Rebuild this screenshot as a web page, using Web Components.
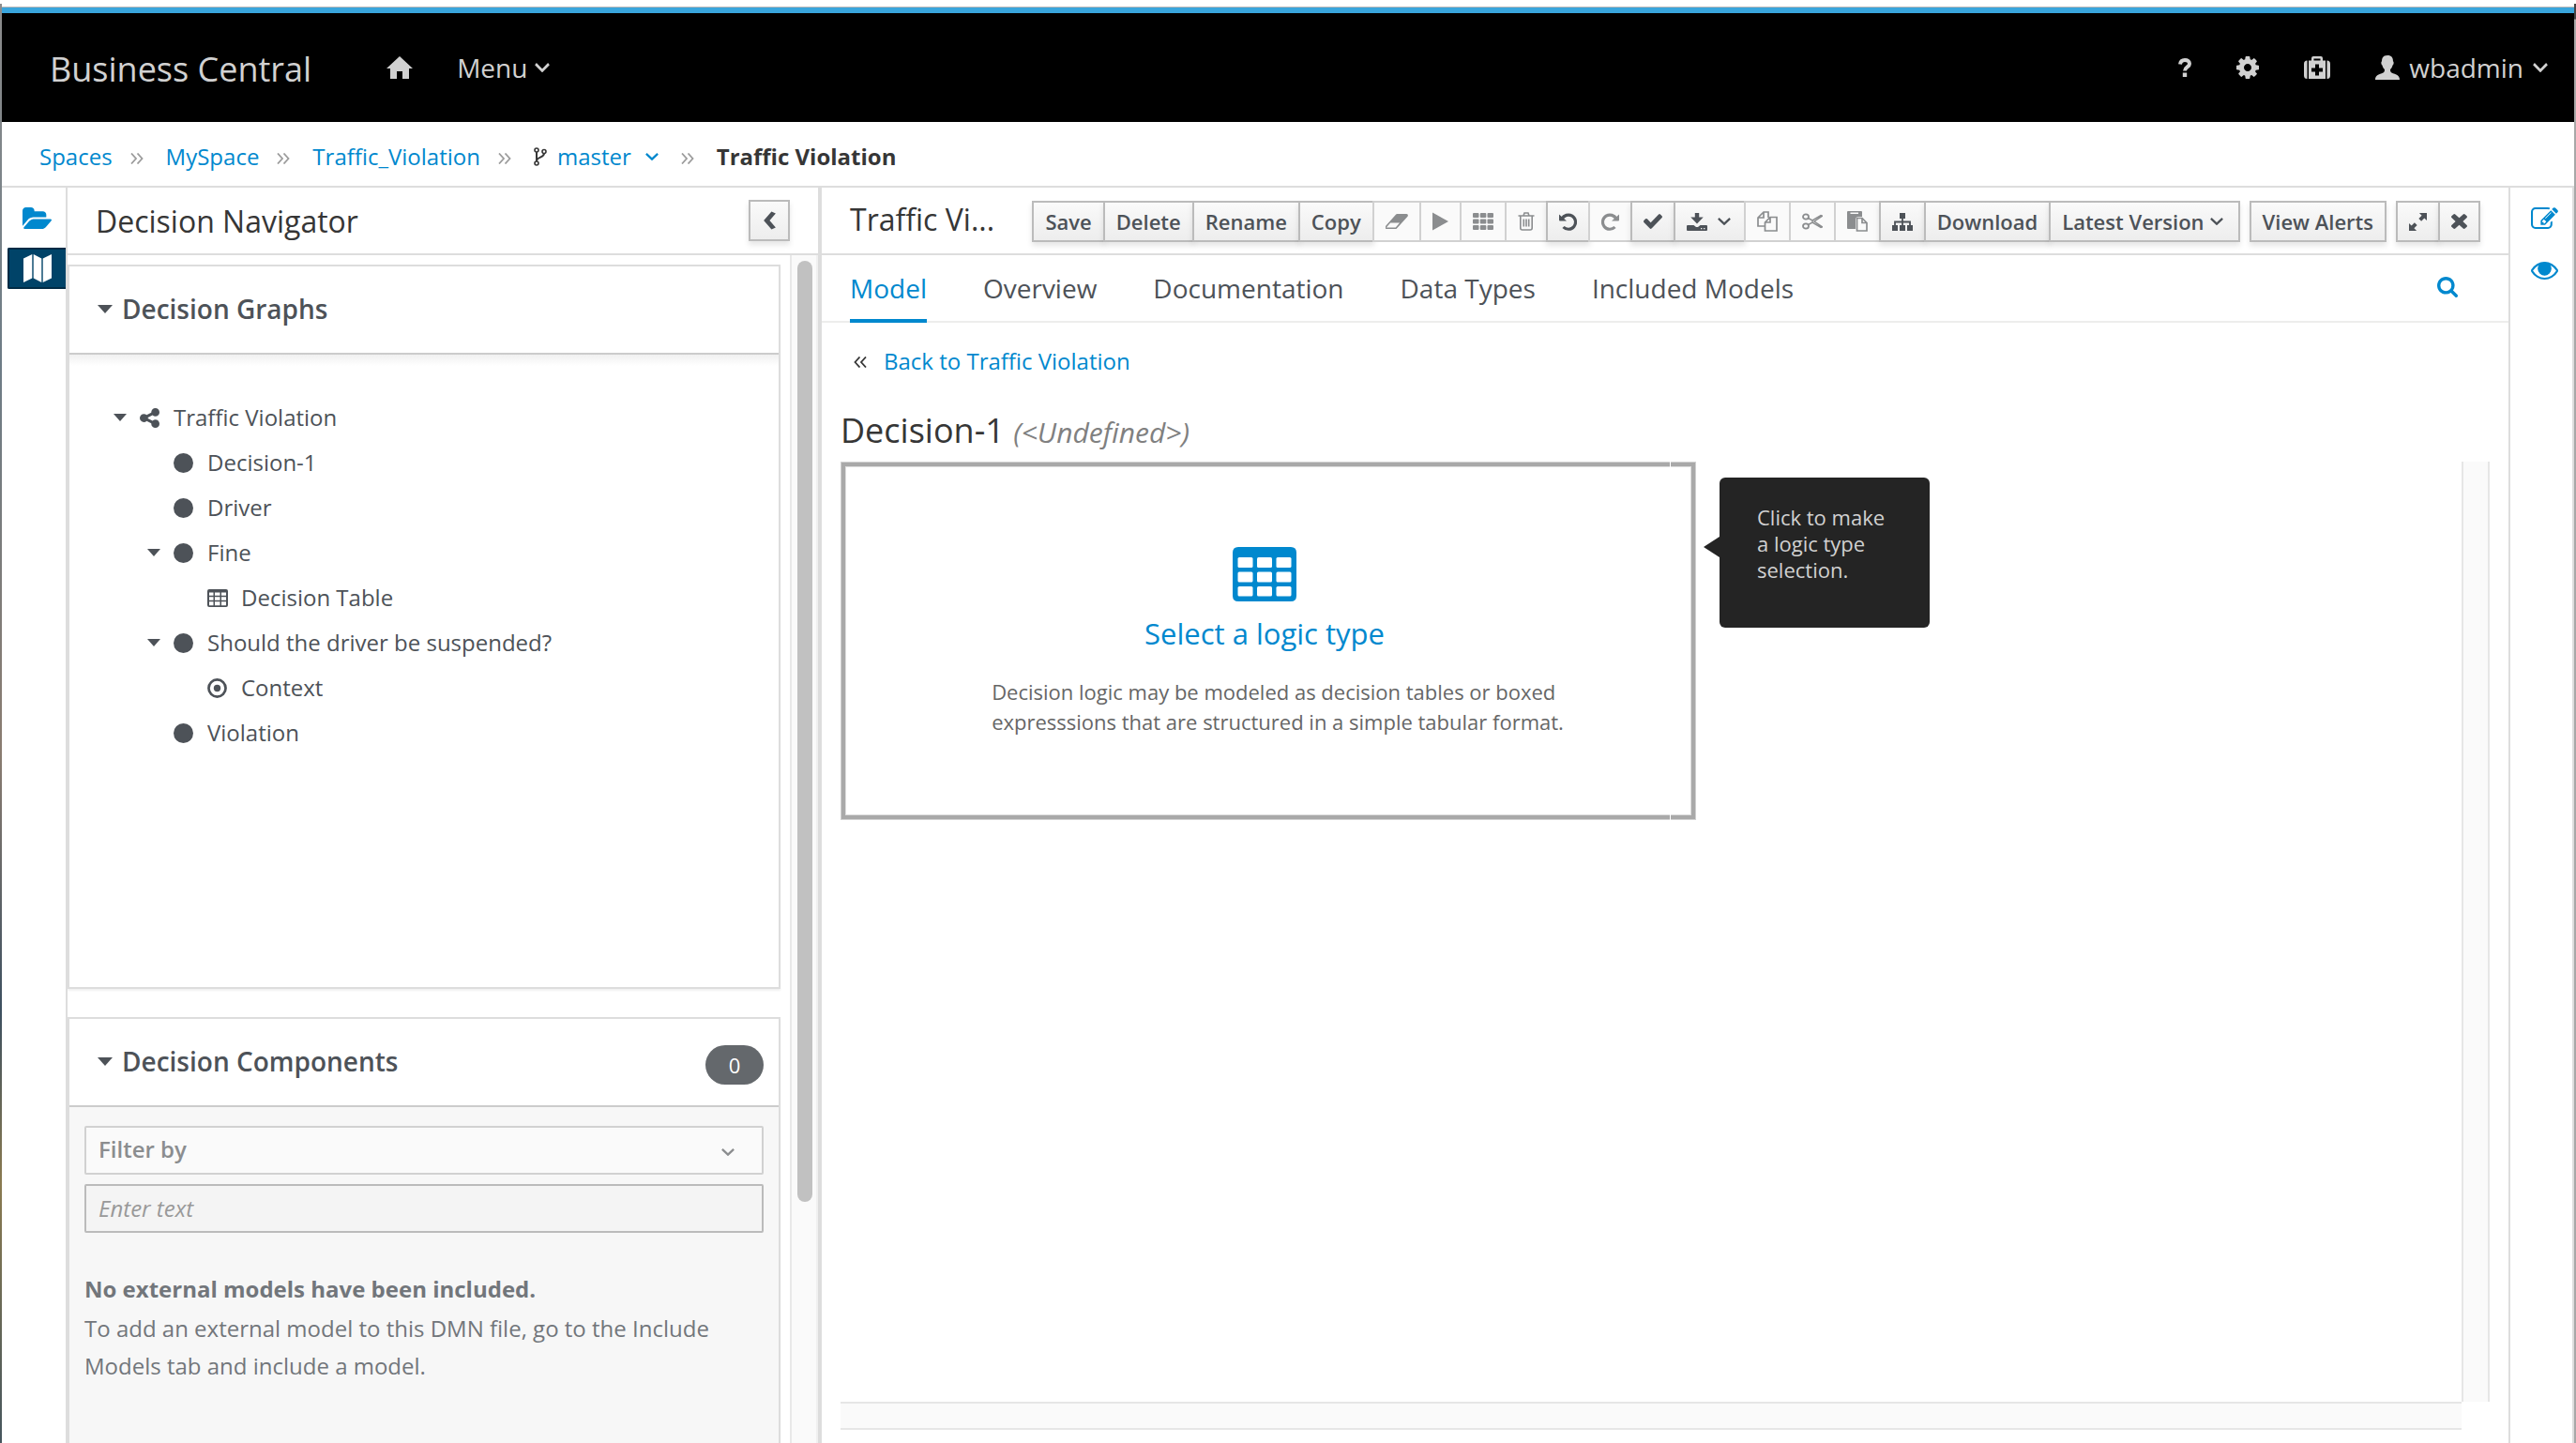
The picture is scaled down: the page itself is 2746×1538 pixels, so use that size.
<!DOCTYPE html>
<html lang="en">
<head>
<meta charset="utf-8">
<title>Business Central - Traffic Violation</title>
<style>
  html, body { margin: 0; height: 100%; }
  body { font-family: "Open Sans", "Noto Sans", sans-serif; font-size: 24px; color: #4d5258; background: #fff; overflow: hidden; }
</style>
</head>
<body>
<bc-app></bc-app>

<script>
const define = (name, html, setup) => {
  const tpl = document.createElement('template');
  tpl.innerHTML = html;
  customElements.define(name, class extends HTMLElement {
    constructor() {
      super();
      this.attachShadow({ mode: 'open' }).append(tpl.content.cloneNode(true));
    }
    connectedCallback() { if (setup) setup(this, this.shadowRoot); }
  });
};

/* Icon set: [viewBox, markup] */
const ICONS = {
  home: ['0 0 28 24', '<path fill="currentColor" d="M14 0 28 13h-4v11h-7v-8h-6v8H4V13H0z"/>'],
  question: ['0 0 14 20', '<path fill="none" stroke="currentColor" stroke-width="4" d="M2 6.500C2.500 3 4.500 2 7 2c3 0 5 1.500 5 4 0 3.500-5 3.500-5 7.500"/><path fill="currentColor" d="M4.800 15.500h4.400V20H4.800z"/>'],
  cog: ['128 128 1536 1536', '<path fill="currentColor" d="M1152 896q0-106-75-181t-181-75-181 75-75 181 75 181 181 75 181-75 75-181zm512-109v222q0 12-8 23t-20 13l-185 28q-19 54-39 91 35 50 107 138 10 12 10 25t-9 23q-27 37-99 108t-94 71q-12 0-26-9l-138-108q-44 23-91 38-16 136-29 186-7 28-36 28h-222q-14 0-24.500-8.500t-11.500-21.500l-28-184q-49-16-90-37l-141 107q-10 9-25 9-14 0-25-11-126-114-165-168-7-10-7-23 0-12 8-23 15-21 51-66.500t54-70.500q-27-50-41-99l-183-27q-13-2-21-12.500t-8-23.500v-222q0-12 8-23t19-13l186-28q14-46 39-92-40-57-107-138-10-12-10-24 0-10 9-23 26-36 98.500-107.500t94.500-71.500q13 0 26 10l138 107q44-23 91-38 16-136 29-186 7-28 36-28h222q14 0 24.500 8.500t11.500 21.500l28 184q49 16 90 37l142-107q9-9 24-9 13 0 25 10 129 119 165 170 7 8 7 22 0 12-8 23-15 21-51 66.500t-54 70.500q26 50 41 98l183 28q13 2 21 12.500t8 23.500z"/>'],
  medkit: ['0 0 28 24', '<path fill="currentColor" d="M3.500 4.500V24Q0 24 0 20.500V8q0-3.500 3.500-3.500zM24.500 4.500Q28 4.500 28 8v12.500q0 3.500-3.500 3.500z"/><path fill="currentColor" fill-rule="evenodd" d="M5 4.500h3V2q0-2 2-2h8q2 0 2 2v2.500h3V24H5zM10.500 4.500h7v-2h-7zM12 8.500v4H8v4h4v4h4v-4h4v-4h-4v-4z"/>'],
  user: ['0 0 26 26', '<path fill="currentColor" d="M13 0c4.500 0 6 2.500 6 6.500 1 0 .8 3.500-.5 4-.4 2.500-1.500 3.500-2.500 4.500 0 3 1 3.500 4 4.500 3.500 1 6 2.500 6 6.500H0c0-4 2.500-5.500 6-6.500 3-1 4-1.500 4-4.500-1-1-2.100-2-2.500-4.500-1.300-.5-1.500-4-.5-4C7 2.500 8.500 0 13 0z"/>'],
  chevron: ['0 0 16 9', '<path fill="none" stroke="currentColor" stroke-width="2.600" d="M1 1l7 6.500L15 1"/>'],
  back: ['0 0 12 20', '<path fill="none" stroke="currentColor" stroke-width="4" d="M9.500 1.500 4 10l5.500 8.500"/>'],
  sep: ['0 0 14 12', '<path fill="none" stroke="currentColor" stroke-width="1.800" d="M1 .5 6 6l-5 5.500M7.500 .5l5 5.500-5 5.500"/>'],
  sepback: ['0 0 14 12', '<path fill="none" stroke="currentColor" stroke-width="1.800" d="M6.500 .5 1.500 6l5 5.500M13 .5 8 6l5 5.500"/>'],
  fork: ['0 0 14 20', '<g fill="none" stroke="currentColor" stroke-width="1.600"><circle cx="3" cy="3" r="2"/><circle cx="3" cy="17" r="2"/><circle cx="11" cy="4.500" r="2"/></g><path fill="none" stroke="currentColor" stroke-width="2" d="M3 5v10M11 6.500C11 11 4 10 3 14"/>'],
  folder: ['0 128 1880 1408', '<path fill="currentColor" d="M1879 952q0 31-31 66l-336 396q-43 51-120.500 86.500t-143.500 35.500h-1088q-34 0-60.500-13t-26.500-43q0-31 31-66l336-396q43-51 120.500-86.500t143.500-35.500h1088q34 0 60.500 13t26.500 43zm-343-344v160h-832q-94 0-197 47.500t-164 119.500l-337 396-5 6q0-4-.5-12.500t-.5-12.500v-960q0-92 66-158t158-66h320q92 0 158 66t66 158v32h544q92 0 158 66t66 158z"/>'],
  map: ['0 0 30 30', '<path fill="currentColor" d="M0 4.500 9.300 0v25.500L0 30zM10.700 0l8.600 4.500V30l-8.600-4.500zM20.700 4.500 30 0v25.500L20.700 30z"/>'],
  caret: ['0 0 16 9', '<path fill="currentColor" d="M0 0h16L8 9z"/>'],
  share: ['128 128 1536 1536', '<path fill="currentColor" d="M1344 1024q133 0 226.500 93.500t93.500 226.500-93.500 226.500-226.500 93.500-226.500-93.500-93.500-226.500q0-12 2-34l-360-180q-92 86-218 86-133 0-226.500-93.500t-93.500-226.500 93.500-226.500 226.500-93.500q126 0 218 86l360-180q-2-22-2-34 0-133 93.500-226.500t226.500-93.500 226.500 93.500 93.500 226.500-93.500 226.500-226.500 93.500q-126 0-218-86l-360 180q2 22 2 34t-2 34l360 180q92-86 218-86z"/>'],
  circle: ['0 0 20 20', '<circle cx="10" cy="10" r="10" fill="currentColor"/>'],
  dot: ['0 0 20 20', '<circle cx="10" cy="10" r="8.600" fill="none" stroke="currentColor" stroke-width="2.600"/><circle cx="10" cy="10" r="3.500" fill="currentColor"/>'],
  tablesmall: ['0 0 22 19', '<path fill="currentColor" fill-rule="evenodd" d="M2 0h18q2 0 2 2v15q0 2-2 2H2q-2 0-2-2V2q0-2 2-2zM2 3.500v3.200h4.500V3.500zm6 0v3.200h5.500V3.500zm7 0v3.200h5V3.500zM2 8.200v3.500h4.500V8.200zm6 0v3.500h5.500V8.200zm7 0v3.500h5V8.200zM2 13.200v4h4.500v-4zm6 0v4h5.500v-4zm7 0v4h5v-4z"/>'],
  table: ['0 0 68 58', '<path fill="currentColor" d="M6 0h56q6 0 6 6v46q0 6-6 6H6q-6 0-6-6V6q0-6 6-6z"/><g fill="#fff"><rect x="5.500" y="11" width="16" height="11" rx="1.500"/><rect x="26" y="11" width="16" height="11" rx="1.500"/><rect x="46.500" y="11" width="16" height="11" rx="1.500"/><rect x="5.500" y="26.500" width="16" height="11" rx="1.500"/><rect x="26" y="26.500" width="16" height="11" rx="1.500"/><rect x="46.500" y="26.500" width="16" height="11" rx="1.500"/><rect x="5.500" y="42" width="16" height="10.500" rx="1.500"/><rect x="26" y="42" width="16" height="10.500" rx="1.500"/><rect x="46.500" y="42" width="16" height="10.500" rx="1.500"/></g>'],
  eraser: ['0 256 1864 1280', '<path fill="currentColor" d="M832 1408l336-384h-768l-336 384h768zm1013-1077q15 34 9.500 71.500t-30.500 65.500l-896 1024q-38 44-96 44h-768q-38 0-69.500-20.500t-47.500-54.500q-15-34-9.500-71.500t30.500-65.500l896-1024q38-44 96-44h768q38 0 69.500 20.500t47.500 54.500z"/>'],
  play: ['0 0 17 20', '<path fill="currentColor" d="M0 .5 17 10 0 19.500z"/>'],
  grid: ['0 0 22 18', '<g fill="currentColor"><rect width="6.500" height="5" rx="1"/><rect x="7.800" width="6.500" height="5" rx="1"/><rect x="15.500" width="6.500" height="5" rx="1"/><rect y="6.500" width="6.500" height="5" rx="1"/><rect x="7.800" y="6.500" width="6.500" height="5" rx="1"/><rect x="15.500" y="6.500" width="6.500" height="5" rx="1"/><rect y="13" width="6.500" height="5" rx="1"/><rect x="7.800" y="13" width="6.500" height="5" rx="1"/><rect x="15.500" y="13" width="6.500" height="5" rx="1"/></g>'],
  trash: ['0 0 18 20', '<path fill="none" stroke="currentColor" stroke-width="1.600" d="M.5 4h17M6 4l1-3h4l1 3M2.800 4v13q0 2 2 2h8.400q2 0 2-2V4M6.300 7.500v8M9 7.500v8M11.700 7.500v8"/>'],
  undo: ['0 0 19 19', '<path fill="none" stroke="currentColor" stroke-width="3.200" d="M3 6.500A7.600 7.600 0 1 1 4.500 15"/><path fill="currentColor" d="M0 1.500 8 8.500H1Q0 8.500 0 7.500z"/>'],
  redo: ['0 0 19 19', '<g transform="matrix(-1 0 0 1 19 0)"><path fill="none" stroke="currentColor" stroke-width="3.200" d="M3 6.500A7.600 7.600 0 1 1 4.500 15"/><path fill="currentColor" d="M0 1.500 8 8.500H1Q0 8.500 0 7.500z"/></g>'],
  check: ['121 334 1550 1188', '<path fill="currentColor" d="M1671 566q0 40-28 68l-724 724-136 136q-28 28-68 28t-68-28l-136-136-362-362q-28-28-28-68t28-68l136-136q28-28 68-28t68 28l294 295 656-657q28-28 68-28t68 28l136 136q28 28 28 68z"/>'],
  download: ['0 0 22 19', '<path fill="currentColor" d="M8.800 0h4.400v4.500h4.500L11 11.500 4.300 4.500h4.500z"/><path fill="currentColor" fill-rule="evenodd" d="M1 13h6.500l2.500 2h2l2.500-2H21q1 0 1 1v4q0 1-1 1H1q-1 0-1-1v-4q0-1 1-1zM15 16v1.300h1.400V16zm3 0v1.300h1.400V16z"/>'],
  copy: ['0 0 22 22', '<path fill="none" stroke="currentColor" stroke-width="1.700" d="M8 16H1V7l6-6h5v6M7 1v6H1M8.500 21V12l5.500-5.500h7V21zM14 6.500V12H8.500"/>'],
  cut: ['0 0 22 18', '<g fill="none" stroke="currentColor"><ellipse cx="4" cy="4" rx="3" ry="2.700" stroke-width="1.800"/><ellipse cx="4" cy="14" rx="3" ry="2.700" stroke-width="1.800"/><path stroke-width="1.500" d="M6.500 5.500 11 8l9-5.500 1.500.7L13 9l8.500 5.800-1.500.7L11 10l-4.500 2.500M11 8v2"/></g>'],
  paste: ['0 0 22 22', '<path fill="currentColor" fill-rule="evenodd" d="M1 0h14q1 0 1 1v5h-4q-3 0-3 3v10H1q-1 0-1-1V1q0-1 1-1zm2.500 1.500V3H12V1.500z"/><path fill="none" stroke="currentColor" stroke-width="1.700" d="M10.500 7.500h5.500l5 5V21H10.500zM16 7.500v5h5"/>'],
  sitemap: ['0 0 22 19', '<path fill="currentColor" d="M8 0h6v6H8zM0 13h6v6H0zM8 13h6v6H8zM16 13h6v6h-6z"/><path fill="none" stroke="currentColor" stroke-width="1.800" d="M11 5v9M3 14V9.500h16V14"/>'],
  expand: ['0 0 20 20', '<path fill="currentColor" d="M11.500 0H20v8.500l-2.800-2.800-3.400 3.400-2.900-2.900 3.400-3.400zM0 11.500l2.800 2.800 3.400-3.400 2.900 2.900-3.400 3.400L8.500 20H0z"/>'],
  times: ['302 366 1188 1188', '<path fill="currentColor" d="M1490 1322q0 40-28 68l-136 136q-28 28-68 28t-68-28l-294-294-294 294q-28 28-68 28t-68-28l-136-136q-28-28-28-68t28-68l294-294-294-294q-28-28-28-68t28-68l136-136q28-28 68-28t68 28l294 294 294-294q28-28 68-28t68 28l136 136q28 28 28 68t-28 68l-294 294 294 294q28 28 28 68z"/>'],
  search: ['64 128 1664 1664', '<path fill="currentColor" d="M1216 832q0-185-131.500-316.500t-316.500-131.500-316.500 131.500-131.500 316.500 131.500 316.500 316.500 131.500 316.500-131.500 131.500-316.500zm512 832q0 52-38 90t-90 38q-54 0-90-38l-343-342q-179 124-399 124-143 0-273.500-55.500t-225-150-150-225-55.500-273.500 55.500-273.500 150-225 225-150 273.500-55.500 273.500 55.500 225 150 150 225 55.500 273.500q0 220-124 399l343 343q37 37 37 90z"/>'],
  edit: ['0 128 1792 1408', '<path fill="currentColor" d="M888 1184l116-116-152-152-116 116v56h96v96h56zm440-720q-16-16-33 1l-350 350q-17 17-1 33t33-1l350-350q17-17 1-33zm80 594v190q0 119-84.500 203.500t-203.500 84.500h-832q-119 0-203.500-84.500t-84.500-203.500v-832q0-119 84.500-203.500t203.500-84.500h832q63 0 117 25 15 7 18 23 3 17-9 29l-49 49q-14 14-32 8-23-6-45-6h-832q-66 0-113 47t-47 113v832q0 66 47 113t113 47h832q66 0 113-47t47-113v-126q0-13 9-22l64-64q15-15 35-7t20 29zm-96-738l288 288-672 672h-288v-288zm444 132l-92 92-288-288 92-92q28-28 68-28t68 28l152 152q28 28 28 68t-28 68z"/>'],
  eye: ['0 384 1792 1152', '<circle cx="896" cy="832" r="420" fill="currentColor"/><path fill="none" stroke="#fff" stroke-width="70" stroke-linecap="round" d="M690 800q20-150 170-190"/><path fill="currentColor" d="M1664 960q-152-236-381-353 61 104 61 225 0 185-131.500 316.500t-316.500 131.500-316.500-131.500-131.500-316.500q0-121 61-225-229 117-381 353 133 205 333.500 326.500t434.500 121.500 434.500-121.500 333.500-326.500zm128 0q0 34-20 69-140 230-376.500 368.500t-499.500 138.500-499.500-139-376.500-368q-20-35-20-69t20-69q140-229 376.500-368t499.500-139 499.500 139 376.500 368q20 35 20 69z"/>']
};

define('bc-icon', `
  <style>:host { display: inline-flex; flex: none; } svg { display: block; }</style>
  <svg aria-hidden="true" preserveAspectRatio="none"></svg>`,
  (el, root) => {
    const svg = root.querySelector('svg');
    const [box, markup] = ICONS[el.getAttribute('name')];
    svg.setAttribute('viewBox', box);
    svg.setAttribute('width', el.getAttribute('w'));
    svg.setAttribute('height', el.getAttribute('h'));
    svg.innerHTML = markup;
  });

/* Bordered push button; consecutive ones share an edge */
define('bc-button', `
  <style>
    :host { display: block; flex: none; }
    :host(:not(:first-child)) { margin-left: -2px; }
    button { display: flex; align-items: center; justify-content: center; gap: 6px; box-sizing: border-box; height: 44px; padding: 0 12px; margin: 0;
      border: 2px solid #bbb; background: linear-gradient(#fafafa, #ededed); color: #4d5258;
      font: 600 22px/36px "Open Sans", sans-serif; box-shadow: 0 4px 6px rgba(3,3,3,.1); white-space: nowrap; }
    :host([menu]) button { padding-right: 16px; }
    button:disabled { background: #fafafa; border-color: #d1d1d1; color: #8b8d8f; box-shadow: none; }
  </style>
  <button type="button"><slot></slot></button>`,
  (el, root) => {
    const b = root.querySelector('button');
    b.disabled = el.hasAttribute('off');
    if (el.hasAttribute('label')) b.setAttribute('aria-label', el.getAttribute('label'));
  });

define('bc-group', `<style>:host { display: flex; }</style><slot></slot>`);

define('bc-navbar', `
  <style>
    :host { display: flex; align-items: center; background: #000; border-top: 6px solid #39a5dc; color: #d1d1d1; min-height: 116px; padding: 0 28px 0 51px; }
    button, a { display: flex; align-items: center; background: none; border: 0; padding: 0; margin: 0; color: inherit; font: 28px/40px "Open Sans", sans-serif; text-decoration: none; }
    .brand { font-size: 36px; padding-top: 4px; }
    .left { display: flex; align-items: center; gap: 47px; margin-left: 80px; }
    .menu { gap: 8px; }
    .right { display: flex; align-items: center; gap: 48px; margin-left: auto; }
    .user { gap: 10px; }
  </style>
  <a class="brand" href="#">Business Central</a>
  <div class="left">
    <a href="#" aria-label="Home"><bc-icon name="home" w="28" h="24"></bc-icon></a>
    <button class="menu" type="button">Menu <bc-icon name="chevron" w="16" h="10"></bc-icon></button>
  </div>
  <div class="right">
    <button type="button" aria-label="Help"><bc-icon name="question" w="14" h="20"></bc-icon></button>
    <button type="button" aria-label="Settings"><bc-icon name="cog" w="24" h="24"></bc-icon></button>
    <button type="button" aria-label="Tools"><bc-icon name="medkit" w="28" h="24"></bc-icon></button>
    <button class="user" type="button"><bc-icon name="user" w="26" h="26"></bc-icon>wbadmin <bc-icon name="chevron" w="16" h="10"></bc-icon></button>
  </div>`);

define('bc-breadcrumbs', `
  <style>
    :host { display: block; border-bottom: 2px solid #ddd; }
    nav { display: flex; align-items: center; box-sizing: border-box; min-height: 68px; padding: 6px 40px 0; line-height: 32px; white-space: nowrap; }
    a { color: #0088ce; text-decoration: none; display: flex; align-items: center; }
    .sep { color: #9c9c9c; margin: 4px 24px 0 19px; }
    .fork { color: #363636; margin-right: 11px; }
    .down { margin: 0 5px 0 15px; }
    strong { color: #363636; font-weight: 700; }
  </style>
  <nav aria-label="Breadcrumb">
    <a href="#">Spaces</a><bc-icon class="sep" name="sep" w="14" h="12"></bc-icon>
    <a href="#">MySpace</a><bc-icon class="sep" name="sep" w="14" h="12"></bc-icon>
    <a href="#">Traffic_Violation</a><bc-icon class="sep" name="sep" w="14" h="12"></bc-icon>
    <bc-icon class="fork" name="fork" w="14" h="20"></bc-icon>
    <a href="#">master<bc-icon class="down" name="chevron" w="14" h="8"></bc-icon></a><bc-icon class="sep" name="sep" w="14" h="12"></bc-icon>
    <strong>Traffic Violation</strong>
  </nav>`);

define('bc-dock', `
  <style>
    :host { display: flex; flex-direction: column; flex: none; box-sizing: border-box; width: 70px; padding-top: 10px; gap: 10px; }
    :host([side=left]) { padding-left: 6px; border-right: 2px solid #ddd; }
    :host([side=right]) { padding-left: 6px; border-left: 2px solid #ddd; border-right: 2px solid #ddd; gap: 12px; }
  </style>
  <slot></slot>`);

define('bc-dock-button', `
  <style>
    :host { display: block; }
    button { display: flex; align-items: center; justify-content: center; box-sizing: border-box; width: 100%; height: 44px; padding: 0; margin: 0; border: 0; background: none; color: #0088ce; }
    :host([active]) button { background: #004368; border: 2px solid #002b45; border-right: 0; color: #fff; border-radius: 2px 0 0 2px; }
  </style>
  <button type="button"><slot></slot></button>`,
  (el, root) => root.querySelector('button').setAttribute('aria-label', el.getAttribute('label')));

define('bc-card', `
  <style>
    :host { display: block; border: 2px solid #ddd; box-shadow: 0 2px 2px rgba(3,3,3,.06); background: #fff; }
    header { display: flex; align-items: center; box-sizing: border-box; height: 94px; padding: 0 16px 0 30px; border-bottom: 2px solid #ccc; }
    h2 { display: flex; align-items: center; gap: 10px; margin: 0 0 2px; font-size: 28px; font-weight: 600; line-height: 40px; }
    ::slotted([slot=badge]) { margin-left: auto; margin-top: 6px; }
    .shade { height: 12px; background: linear-gradient(#f0f0f0, #fff); }
    .body { padding: 31px 16px 247px; }
    :host([filled]) .shade { display: none; }
    :host([filled]) .body { padding: 20px 16px; }
    :host([filled]) { background: #f7f7f7; flex: 1; border-bottom: 0; }
    :host([filled]) header { background: #fff; }
  </style>
  <header><h2><bc-icon name="caret" w="16" h="9"></bc-icon><slot name="title"></slot></h2><slot name="badge"></slot></header>
  <div class="shade"></div>
  <div class="body"><slot></slot></div>`);

define('bc-node', `
  <style>
    :host { display: block; }
    .row { display: flex; align-items: center; height: 48px; line-height: 32px; white-space: nowrap; }
    .caret { width: 28px; display: flex; visibility: hidden; }
    :host([open]) > .row > .caret { visibility: visible; }
    .icon { width: 36px; display: flex; }
    .kids { padding-left: 36px; }
  </style>
  <div class="row"><span class="caret"><bc-icon name="caret" w="14" h="8"></bc-icon></span><span class="icon"></span><slot name="text"></slot></div>
  <div class="kids"><slot></slot></div>`,
  (el, root) => {
    const small = el.getAttribute('icon') === 'tablesmall';
    root.querySelector('.icon').innerHTML = `<bc-icon name="${el.getAttribute('icon')}" w="${small ? 22 : 21}" h="${small ? 19 : 21}"></bc-icon>`;
  });

define('bc-navigator', `
  <style>
    :host { display: flex; flex-direction: column; flex: none; width: 800px; border-right: 4px solid #ddd; min-height: 0; }
    .head { display: flex; align-items: center; justify-content: space-between; box-sizing: border-box; height: 72px; padding: 0 30px; border-bottom: 2px solid #ddd; flex: none; }
    h1 { margin: 2px 0 0; font-size: 32px; font-weight: 400; line-height: 44px; color: #363636; }
    .scroll { display: flex; flex: 1; min-height: 0; }
    .cards { flex: 1; display: flex; flex-direction: column; gap: 30px; padding: 10px 10px 0 0; overflow: hidden; }
    .track { width: 16px; padding: 6px 4px 6px 6px; border-left: 2px solid #e8e8e8; border-right: 2px solid #f0f0f0; background: #fafafa; }
    .thumb { height: 80%; border-radius: 8px; background: #c1c1c1; }
    .tree { padding-left: 31px; }
    .badge { display: block; min-width: 62px; box-sizing: border-box; padding: 0 20px; border-radius: 21px; background: #64686c; color: #fff; line-height: 42px; text-align: center; font-size: 22px; }
    form { display: flex; flex-direction: column; gap: 10px; }
    .pick { display: grid; align-items: center; }
    .pick > * { grid-area: 1 / 1; }
    .pick bc-icon { justify-self: end; margin: 4px 31px 0 0; color: #8b8d8f; }
    select, input { appearance: none; box-sizing: border-box; width: 100%; height: 52px; margin: 0; padding: 0 13px 2px; border: 2px solid #d1d1d1; border-radius: 2px; background: #fafafa; color: #8b8d8f; opacity: 1; font: 600 24px/40px "Open Sans", sans-serif; }
    input { background: #f4f4f4; border-color: #bbb; font-weight: 400; }
    input::placeholder { color: #999; font-style: italic; opacity: 1; }
    .empty { margin-top: 38px; color: #72767b; line-height: 40px; }
    .empty strong { display: block; line-height: 44px; }
    .empty p { margin: 0; }
  </style>
  <div class="head"><h1>Decision Navigator</h1><bc-button label="Collapse"><bc-icon name="back" w="16" h="20"></bc-icon></bc-button></div>
  <div class="scroll">
    <div class="cards">
      <bc-card>
        <span slot="title">Decision Graphs</span>
        <div class="tree">
          <bc-node icon="share" open><span slot="text">Traffic Violation</span>
            <bc-node icon="circle"><span slot="text">Decision-1</span></bc-node>
            <bc-node icon="circle"><span slot="text">Driver</span></bc-node>
            <bc-node icon="circle" open><span slot="text">Fine</span>
              <bc-node icon="tablesmall"><span slot="text">Decision Table</span></bc-node>
            </bc-node>
            <bc-node icon="circle" open><span slot="text">Should the driver be suspended?</span>
              <bc-node icon="dot"><span slot="text">Context</span></bc-node>
            </bc-node>
            <bc-node icon="circle"><span slot="text">Violation</span></bc-node>
          </bc-node>
        </div>
      </bc-card>
      <bc-card filled>
        <span slot="title">Decision Components</span>
        <span slot="badge" class="badge">0</span>
        <form>
          <div class="pick"><select aria-label="Filter by" disabled><option>Filter by</option></select><bc-icon name="chevron" w="14" h="8"></bc-icon></div>
          <input type="text" placeholder="Enter text" aria-label="Enter text">
        </form>
        <div class="empty"><strong>No external models have been included.</strong><p>To add an external model to this DMN file, go to the Include Models tab and include a model.</p></div>
      </bc-card>
    </div>
    <div class="track"><div class="thumb"></div></div>
  </div>`);

define('bc-toolbar', `
  <style>
    :host { display: flex; align-items: center; box-sizing: border-box; height: 72px; padding: 2px 30px 0; border-bottom: 2px solid #ddd; flex: none; }
    h1 { margin: 0 0 4px; font-size: 32px; font-weight: 400; line-height: 44px; color: #363636; white-space: nowrap; }
    .actions { display: flex; gap: 10px; margin-left: auto; }
    .gap { margin: 0 -2px 0 5px; }
  </style>
  <h1>Traffic Vi...</h1>
  <div class="actions">
    <bc-group>
      <bc-button>Save</bc-button><bc-button>Delete</bc-button><bc-button>Rename</bc-button><bc-button>Copy</bc-button>
      <bc-button off label="Clear"><bc-icon name="eraser" w="24" h="16"></bc-icon></bc-button>
      <bc-button off label="Run"><bc-icon name="play" w="17" h="20"></bc-icon></bc-button>
      <bc-button off label="Grid"><bc-icon name="grid" w="22" h="18"></bc-icon></bc-button>
      <bc-button off label="Remove"><bc-icon name="trash" w="18" h="20"></bc-icon></bc-button>
      <bc-button label="Undo"><bc-icon name="undo" w="19" h="19"></bc-icon></bc-button>
      <bc-button off label="Redo"><bc-icon name="redo" w="19" h="19"></bc-icon></bc-button>
      <bc-button label="Validate"><bc-icon name="check" w="20" h="16"></bc-icon></bc-button>
      <bc-button menu label="Export"><bc-icon name="download" w="22" h="19"></bc-icon><bc-icon class="gap" name="chevron" w="14" h="8"></bc-icon></bc-button>
      <bc-button off label="Copy selection"><bc-icon name="copy" w="22" h="22"></bc-icon></bc-button>
      <bc-button off label="Cut selection"><bc-icon name="cut" w="22" h="18"></bc-icon></bc-button>
      <bc-button off label="Paste selection"><bc-icon name="paste" w="22" h="22"></bc-icon></bc-button>
      <bc-button label="Layout"><bc-icon name="sitemap" w="22" h="19"></bc-icon></bc-button>
      <bc-button>Download</bc-button>
      <bc-button menu>Latest Version <bc-icon name="chevron" w="14" h="8"></bc-icon></bc-button>
    </bc-group>
    <bc-group><bc-button>View Alerts</bc-button></bc-group>
    <bc-group>
      <bc-button label="Expand"><bc-icon name="expand" w="19" h="19"></bc-icon></bc-button>
      <bc-button label="Close"><bc-icon name="times" w="17" h="16"></bc-icon></bc-button>
    </bc-group>
  </div>`);

define('bc-tabs', `
  <style>
    :host { display: flex; align-items: flex-start; box-sizing: border-box; height: 72px; padding: 0 54px 0 30px; border-bottom: 2px solid #ededec; flex: none; }
    nav { display: flex; gap: 60px; }
    a { display: block; box-sizing: border-box; height: 72px; line-height: 70px; font-size: 28px; color: #4d5258; text-decoration: none; white-space: nowrap; }
    a[aria-current] { color: #0088ce; border-bottom: 4px solid #0088ce; }
    button { margin: 23px 0 0 auto; padding: 0; border: 0; background: none; color: #0088ce; display: flex; }
  </style>
  <nav><a href="#" aria-current="page">Model</a><a href="#">Overview</a><a href="#">Documentation</a><a href="#">Data Types</a><a href="#">Included Models</a></nav>
  <button type="button" aria-label="Search"><bc-icon name="search" w="22" h="22"></bc-icon></button>`);

define('bc-tooltip', `
  <style>
    :host { display: block; position: relative; box-sizing: border-box; width: 224px; min-height: 160px; padding: 28px 40px; border-radius: 6px; background: #242424; color: #d1d1d1; font-size: 22px; line-height: 28px; }
    .arrow { position: absolute; right: 100%; top: 63px; border: solid transparent; border-width: 11px 17px 11px 0; border-right-color: #242424; }
  </style>
  <span class="arrow"></span><slot></slot>`);

define('bc-canvas', `
  <style>
    :host { display: grid; grid-template-columns: 1fr 30px; grid-template-rows: 1fr 30px; flex: 1; min-height: 0; }
    .view { display: flex; align-items: flex-start; gap: 25px; min-width: 0; }
    .box { display: flex; flex-direction: column; align-items: center; position: relative; box-sizing: border-box; width: 912px; min-height: 382px; padding: 86px 8px 0 0; border: 5px solid #a9a9a9; outline: 1px solid #d0d0d0; outline-offset: -1px; box-shadow: inset 0 0 0 1px #ddd; background: #fff; font: 22px/32px "Open Sans", sans-serif; color: #666; text-align: left; }
    /* seam where the last grid column meets its resize strip */
    .box::after { content: ""; position: absolute; top: -5px; bottom: -5px; right: 22px; width: 1px; background: #fff; }
    .box bc-icon { color: #0088ce; }
    .title { font-size: 31px; line-height: 44px; margin-top: 12px; color: #0088ce; }
    .text { margin-top: 24px; padding-left: 28px; }
    bc-tooltip { margin-top: 17px; }
    .v { box-sizing: border-box; border: solid #e6e6e6; border-width: 0 2px; background: #fafafa; }
    .h { box-sizing: border-box; border: solid #e6e6e6; border-width: 2px 0; background: #fafafa; }
  </style>
  <div class="view">
    <button class="box" type="button">
      <bc-icon name="table" w="68" h="58"></bc-icon>
      <span class="title">Select a logic type</span>
      <span class="text">Decision logic may be modeled as decision tables or boxed<br>expresssions that are structured in a simple tabular format.</span>
    </button>
    <bc-tooltip>Click to make<br>a logic type<br>selection.</bc-tooltip>
  </div>
  <div class="v"></div>
  <div class="h"></div>`);

define('bc-editor', `
  <style>
    :host { display: flex; flex-direction: column; flex: 1; min-width: 0; min-height: 0; }
    main { display: flex; flex-direction: column; flex: 1; min-height: 0; padding: 21px 20px 14px; }
    .back { display: flex; align-items: center; gap: 18px; line-height: 40px; padding-left: 14px; }
    .back a { color: #0088ce; text-decoration: none; }
    .back bc-icon { color: #363636; margin-top: 2px; }
    h2 { margin: 30px 0 9px; font-size: 36px; font-weight: 400; line-height: 48px; color: #363636; }
    em { font-size: 30px; line-height: 1; color: #808080; }
  </style>
  <bc-toolbar></bc-toolbar>
  <bc-tabs></bc-tabs>
  <main>
    <div class="back"><bc-icon name="sepback" w="14" h="12"></bc-icon><a href="#">Back to Traffic Violation</a></div>
    <h2>Decision-1 <em>(&lt;Undefined&gt;)</em></h2>
    <bc-canvas></bc-canvas>
  </main>`);

define('bc-app', `
  <style>
    :host { display: flex; box-sizing: border-box; height: 100vh; padding-top: 4px; }
    .edge { width: 2px; flex: none; }
    .l { background: linear-gradient(#8c8c8c, #6d7c86 25%, #8a7c70 52%, #3d5060 70%, #8a7a50 82%, #46565e); }
    .r { background: linear-gradient(#444 16px, #a8a8a8 17px, #a8a8a8); }
    .page { display: flex; flex-direction: column; flex: 1; min-width: 0; }
    .lip { height: 3px; border-bottom: 1px solid #b8b8b8; flex: none; }
    .work { display: flex; flex: 1; min-height: 0; }
  </style>
  <div class="edge l"></div>
  <div class="page">
    <div class="lip"></div>
    <bc-navbar></bc-navbar>
    <bc-breadcrumbs></bc-breadcrumbs>
    <div class="work">
      <bc-dock side="left">
        <bc-dock-button label="Project explorer"><bc-icon name="folder" w="31" h="23"></bc-icon></bc-dock-button>
        <bc-dock-button label="Decision navigator" active><bc-icon name="map" w="30" h="30"></bc-icon></bc-dock-button>
      </bc-dock>
      <bc-navigator></bc-navigator>
      <bc-editor></bc-editor>
      <bc-dock side="right">
        <bc-dock-button label="Properties"><bc-icon name="edit" w="29" h="23"></bc-icon></bc-dock-button>
        <bc-dock-button label="Preview"><bc-icon name="eye" w="29" h="19"></bc-icon></bc-dock-button>
      </bc-dock>
    </div>
  </div>
  <div class="edge r"></div>`);
</script>
</body>
</html>
